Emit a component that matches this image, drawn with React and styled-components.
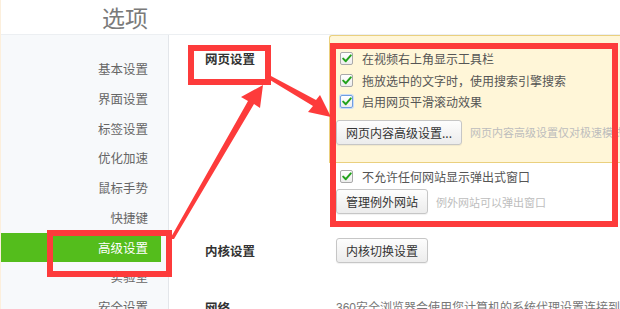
import styled, { createGlobalStyle } from 'styled-components';

const GlobalStyle = createGlobalStyle`
  html, body {
    margin: 0;
    padding: 0;
    background: #fff;
  }
  body {
    font-family: 'Liberation Sans', 'Noto Sans CJK SC', sans-serif;
  }
`;

const sideItems = ['基本设置', '界面设置', '标签设置', '优化加速', '鼠标手势', '快捷键', '高级设置', '实验室', '安全设置'];

const CheckIcon = () => (
  <svg width='10' height='9' viewBox='0 0 10 9'>
    <path d='M1.2 4.6 L3.8 7.2 L8.8 1.4' fill='none' stroke='#23a21c' strokeWidth='2' strokeLinecap='round' strokeLinejoin='round' />
  </svg>
);

const Check = ({ label, focus }) => (
  <CheckRow>
    <Box $focus={focus}>
      <CheckIcon />
    </Box>
    <CheckText>{label}</CheckText>
  </CheckRow>
);

const App = () => {
  return (
    <Page>
      <GlobalStyle />
      <Header>
        <h1>选项</h1>
      </Header>
      <Body>
        <Sidebar>
          {sideItems.map((item) => (
            <SideItem key={item} $active={item === '高级设置'}>
              {item}
            </SideItem>
          ))}
        </Sidebar>
        <Content>
          <Section>
            <Label $top>网页设置</Label>
            <Controls>
              <Panel>
                <Check label='在视频右上角显示工具栏' />
                <Check label='拖放选中的文字时，使用搜索引擎搜索' />
                <Check label='启用网页平滑滚动效果' focus />
                <ButtonRow>
                  <Button>网页内容高级设置...</Button>
                  <Hint>网页内容高级设置仅对极速模式生效</Hint>
                </ButtonRow>
              </Panel>
              <SubPanel>
                <Check label='不允许任何网站显示弹出式窗口' />
                <ButtonRow $tight>
                  <Button>管理例外网站</Button>
                  <Hint>例外网站可以弹出窗口</Hint>
                </ButtonRow>
              </SubPanel>
            </Controls>
          </Section>
          <Section $center $gap={14}>
            <Label>内核设置</Label>
            <Controls>
              <Button>内核切换设置</Button>
            </Controls>
          </Section>
          <Section $center $gap={35}>
            <Label>网络</Label>
            <Controls>
              <Note>360安全浏览器会使用您计算机的系统代理设置连接到网络</Note>
            </Controls>
          </Section>
        </Content>
      </Body>

      <Mark style={{ left: 187, top: 45, width: 83, height: 40 }} />
      <Mark style={{ left: 329, top: 43, width: 288, height: 184 }} />
      <Mark style={{ left: 46, top: 230, width: 125, height: 47 }} />
      <Arrows width='620' height='309' viewBox='0 0 620 309'>
        <polygon points='169,239 247,101 240,97 262,85 259,108 253,104 173,239' fill='#fd3b3b' />
        <polygon points='270,76 315,100 319,95 330,117 307,112 312,106 269,80' fill='#fd3b3b' />
      </Arrows>
    </Page>
  );
};

const Page = styled.div`
  position: relative;
  width: 620px;
  height: 309px;
  overflow: hidden;
  box-sizing: border-box;
  border-left: 1px solid #fcefdc;
`;

const Header = styled.header`
  height: 35px;
  border-bottom: 1px solid #eceff2;
  box-sizing: border-box;

  h1 {
    margin: 0;
    padding-left: 101px;
    padding-top: 1px;
    font-size: 23px;
    line-height: 32px;
    font-weight: normal;
    color: #7a7a7a;
    font-family: 'Noto Sans CJK SC', sans-serif;
  }
`;

const Body = styled.div`
  display: flex;
  height: 274px;
`;

const Sidebar = styled.nav`
  width: 167px;
  flex-shrink: 0;
  padding-top: 19px;
  background: #f7f9fb;
  border-right: 1px solid #e3e6ea;
`;

const SideItem = styled.div`
  height: 29.75px;
  line-height: 29.75px;
  margin-right: ${(p) => (p.$active ? '7px' : '0')};
  padding-right: ${(p) => (p.$active ? '13px' : '20px')};
  text-align: right;
  font-size: 12.5px;
  font-family: 'Noto Sans CJK SC', sans-serif;
  color: ${(p) => (p.$active ? '#fff' : '#666')};
  background: ${(p) => (p.$active ? '#54bd1c' : 'transparent')};
`;

const Content = styled.main`
  flex: 1;
  min-width: 0;
  display: flex;
  flex-direction: column;
`;

const Section = styled.section`
  display: flex;
  align-items: ${(p) => (p.$center ? 'center' : 'flex-start')};
  margin-top: ${(p) => (p.$gap ? `${p.$gap}px` : '0')};
`;

const Label = styled.div`
  width: 124px;
  flex-shrink: 0;
  padding-left: 36px;
  padding-top: ${(p) => (p.$top ? '14px' : '0')};
  font-size: 12.5px;
  line-height: 20px;
  font-weight: bold;
  color: #333;
  font-family: 'Noto Sans CJK SC', sans-serif;
`;

const Controls = styled.div`
  flex: 1;
  min-width: 0;
  padding-left: 7px;
  display: flex;
  flex-direction: column;
  align-items: flex-start;
`;

const Panel = styled.div`
  align-self: stretch;
  margin-left: -7px;
  padding: 12px 0 17px 6px;
  background: #fff6d8;
  border: 1px solid #ead07e;
  border-right: none;
  border-top-left-radius: 3px;
  overflow: hidden;
  white-space: nowrap;
`;

const SubPanel = styled.div`
  align-self: stretch;
  padding: 3px 0 10px 0;
  white-space: nowrap;
  overflow: hidden;
`;

const CheckRow = styled.label`
  display: flex;
  align-items: center;
  height: 21.5px;
  padding-left: 4px;
`;

const CheckText = styled.span`
  margin-left: 9px;
  font-size: 12px;
  color: #555;
  font-family: 'Noto Sans CJK SC', sans-serif;
`;

const Box = styled.span`
  width: 13px;
  height: 13px;
  box-sizing: border-box;
  display: flex;
  align-items: center;
  justify-content: center;
  border: 1px solid ${(p) => (p.$focus ? '#6f9de0' : '#a9a9a9')};
  border-radius: 2px;
  background: linear-gradient(#ffffff, #ededed);
  box-shadow: ${(p) => (p.$focus ? '0 0 0 1px #c9dcf7' : 'none')};
`;

const ButtonRow = styled.div`
  display: flex;
  align-items: center;
  margin-top: ${(p) => (p.$tight ? '2px' : '7px')};
`;

const Button = styled.button`
  height: 25px;
  padding: 0 9px;
  font-size: 12px;
  font-family: 'Noto Sans CJK SC', sans-serif;
  color: #333;
  background: linear-gradient(#fdfdfd, #ececec);
  border: 1px solid #c6c6c6;
  border-radius: 3px;
  box-shadow: 0 1px 1px rgba(0, 0, 0, 0.06);
  white-space: nowrap;
`;

const Hint = styled.span`
  margin-left: 8px;
  font-size: 11px;
  color: #bdbdbd;
  font-family: 'Noto Sans CJK SC', sans-serif;
  white-space: nowrap;
`;

const Note = styled.div`
  font-size: 12px;
  line-height: 20px;
  color: #777;
  white-space: nowrap;
  font-family: 'Liberation Sans', 'Noto Sans CJK SC', sans-serif;
`;

const Mark = styled.div`
  position: absolute;
  box-sizing: border-box;
  border: 6px solid #fd3b3b;
  pointer-events: none;
`;

const Arrows = styled.svg`
  position: absolute;
  left: 0;
  top: 0;
  pointer-events: none;
`;

export default App;
